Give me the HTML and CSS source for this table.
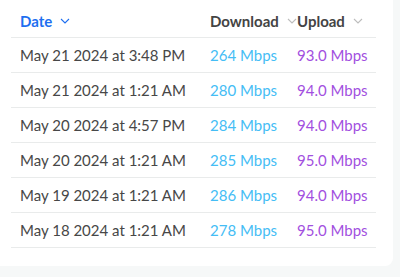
FILE: index.html
```html
<!DOCTYPE html>
<html>
<head>
<meta charset="utf-8">
<link rel="stylesheet" href="styles.css">
</head>
<body>
<div class="card">
  <div class="table">
    <div class="row head">
      <div class="cell date-h">Date<svg class="chev" viewBox="0 0 10 6"><path d="M1 1l4 4 4-4"/></svg></div>
      <div class="cell">Download<svg class="chev gray" viewBox="0 0 10 6"><path d="M1 1l4 4 4-4"/></svg></div>
      <div class="cell">Upload<svg class="chev gray" viewBox="0 0 10 6"><path d="M1 1l4 4 4-4"/></svg></div>
    </div>
    <div class="row"><div class="cell">May 21 2024 at 3:48 PM</div><div class="cell dl">264 Mbps</div><div class="cell ul">93.0 Mbps</div></div>
    <div class="row"><div class="cell">May 21 2024 at 1:21 AM</div><div class="cell dl">280 Mbps</div><div class="cell ul">94.0 Mbps</div></div>
    <div class="row"><div class="cell">May 20 2024 at 4:57 PM</div><div class="cell dl">284 Mbps</div><div class="cell ul">94.0 Mbps</div></div>
    <div class="row"><div class="cell">May 20 2024 at 1:21 AM</div><div class="cell dl">285 Mbps</div><div class="cell ul">95.0 Mbps</div></div>
    <div class="row"><div class="cell">May 19 2024 at 1:21 AM</div><div class="cell dl">286 Mbps</div><div class="cell ul">94.0 Mbps</div></div>
    <div class="row"><div class="cell">May 18 2024 at 1:21 AM</div><div class="cell dl">278 Mbps</div><div class="cell ul">95.0 Mbps</div></div>
  </div>
</div>
</body>
</html>
```
FILE: styles.css
```css
* { box-sizing: border-box; }
html, body { margin: 0; padding: 0; }
body {
  background: #f6f8f8;
  font-family: "Lato", "Noto Sans", sans-serif;
  width: 400px;
  height: 277px;
  overflow: hidden;
}
.card {
  background: #fff;
  width: 393px;
  height: 266px;
  border-radius: 0 0 8px 0;
  padding: 0 17px 0 11px;
}
.row {
  display: grid;
  grid-template-columns: 190px 87px 1fr;
  height: 35px;
  border-bottom: 1px solid #e9ebeb;
  align-items: center;
  padding-left: 9px;
  font-size: 15px;
  color: #474747;
}
.row.head {
  height: 38px;
  padding-top: 4px;
  font-weight: 700;
  color: #444;
}
.cell { white-space: nowrap; display: flex; align-items: center; }
.date-h { color: #1e6ff0; }
.chev {
  width: 10px;
  height: 6px;
  margin-left: 8px;
  fill: none;
  stroke: #1e6ff0;
  stroke-width: 1.1;
}
.chev.gray { stroke: #bdbdbd; }
.dl { color: #45bdf5; }
.ul { color: #a24fe0; }
```
